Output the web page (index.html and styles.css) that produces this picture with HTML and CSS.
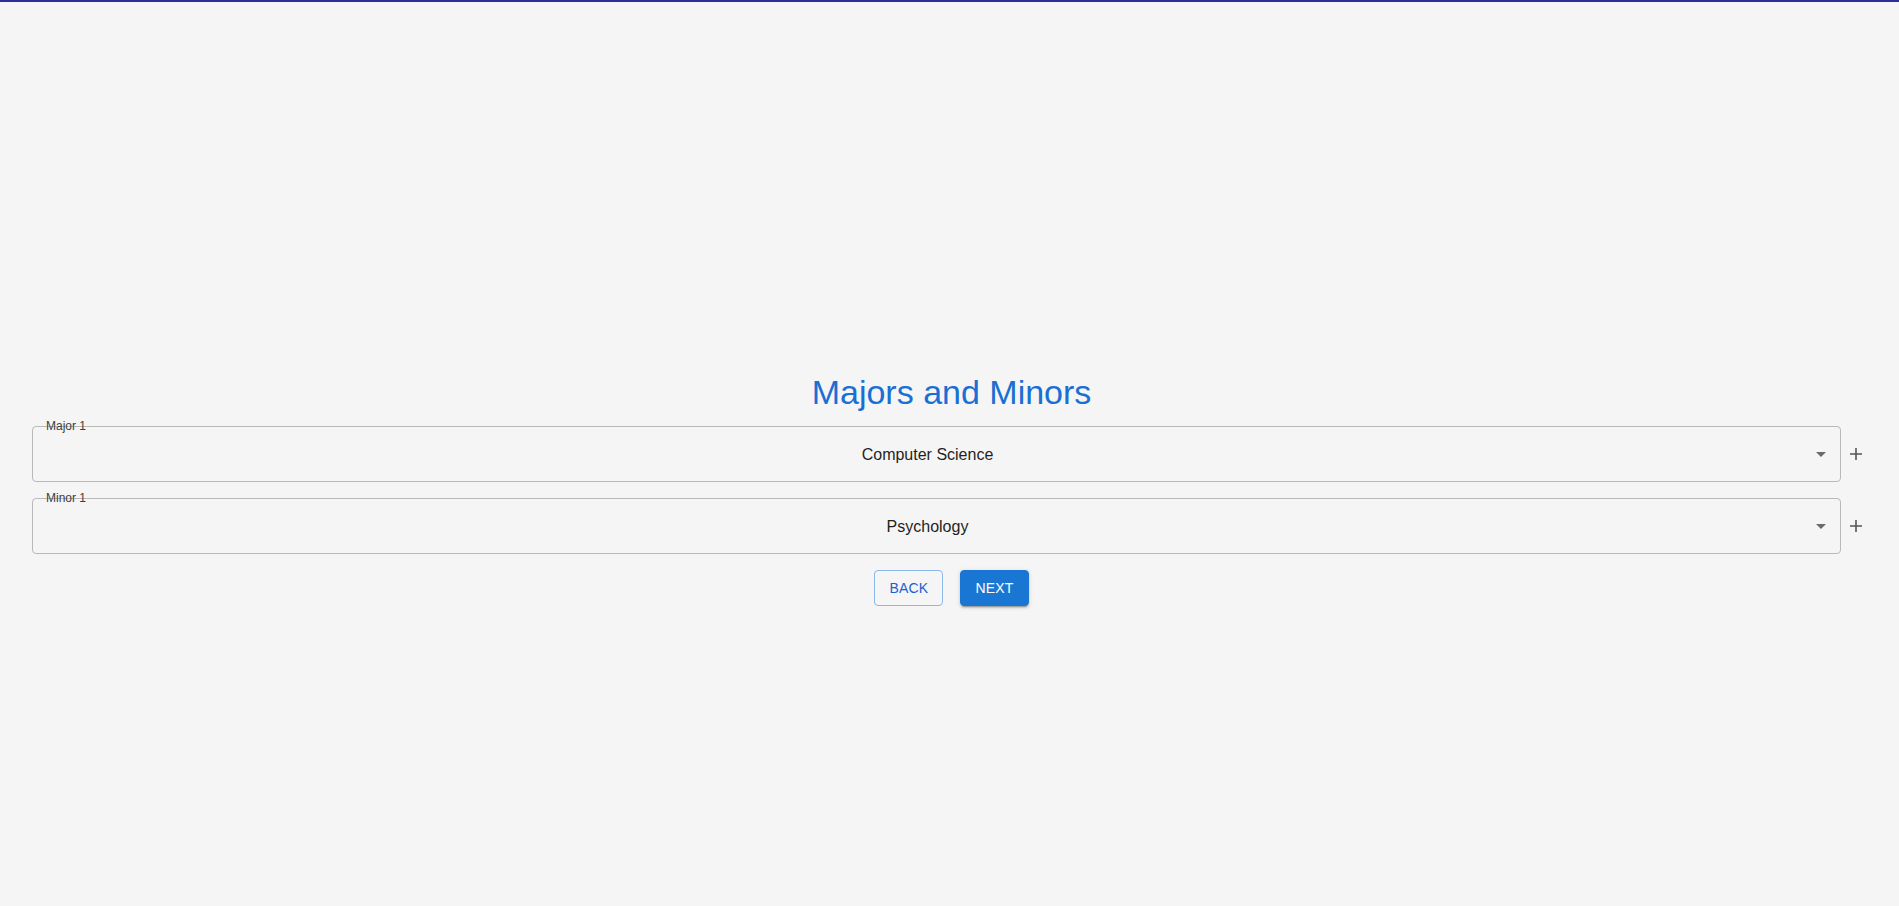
FILE: index.html
```html
<!DOCTYPE html>
<html lang="en">
<head>
  <meta charset="UTF-8" />
  <title>Majors and Minors</title>
  <link rel="stylesheet" href="styles.css">
</head>
<body>
  <div class="top-bar"></div>
  <div class="page">
    <h1 class="title">Majors and Minors</h1>

    <div class="field-row">
      <div class="select-box">
        <span class="select-label">Major 1</span>
        <div class="select-value">Computer Science</div>
        <svg class="select-arrow" viewBox="0 0 24 24" width="24" height="24"><path d="M7 10l5 5 5-5z"/></svg>
      </div>
      <button class="add-btn" title="Add major">
        <svg viewBox="0 0 12 12" width="12" height="12"><path d="M6 0v12M0 6h12"/></svg>
      </button>
    </div>

    <div class="field-row">
      <div class="select-box">
        <span class="select-label">Minor 1</span>
        <div class="select-value">Psychology</div>
        <svg class="select-arrow" viewBox="0 0 24 24" width="24" height="24"><path d="M7 10l5 5 5-5z"/></svg>
      </div>
      <button class="add-btn" title="Add minor">
        <svg viewBox="0 0 12 12" width="12" height="12"><path d="M6 0v12M0 6h12"/></svg>
      </button>
    </div>

    <div class="actions">
      <button class="btn btn-outline">Back</button>
      <button class="btn btn-filled">Next</button>
    </div>
  </div>
</body>
</html>
```

FILE: styles.css
```css
html, body {
  margin: 0;
  padding: 0;
}

body {
  font-family: 'Liberation Sans', Arial, sans-serif;
  background: #f5f5f5;
  min-height: 100vh;
}

.top-bar {
  height: 2px;
  background: #2c2f98;
}

.page {
  padding: 369px 28px 0 32px;
}

.title {
  margin: 0 0 13px;
  font-size: 34px;
  line-height: 42px;
  font-weight: 400;
  text-align: center;
  color: #1a6fd4;
}

.field-row {
  display: flex;
  align-items: center;
  margin-bottom: 16px;
}

.select-box {
  flex: 1;
  position: relative;
  height: 53px;
  border: 1px solid #b9b9b9;
  border-radius: 4px;
  display: flex;
  align-items: center;
  padding: 1px 32px 0 14px;
}

.select-label {
  position: absolute;
  left: 13px;
  top: -8px;
  font-size: 12px;
  line-height: 14px;
  color: #3d3d3d;
}

.select-value {
  flex: 1;
  text-align: center;
  font-size: 16px;
  color: #1f1f1f;
}

.select-arrow {
  position: absolute;
  right: 7px;
  top: 15px;
  fill: #6b6b6b;
}

.add-btn {
  width: 30px;
  height: 30px;
  padding: 0;
  border: none;
  background: none;
  display: flex;
  align-items: center;
  justify-content: center;
  cursor: pointer;
}

.add-btn svg {
  stroke: #555;
  stroke-width: 1.6;
  fill: none;
}

.actions {
  display: flex;
  justify-content: center;
  gap: 17px;
}

.btn {
  min-width: 64px;
  height: 36px;
  padding: 0 14px;
  border-radius: 4px;
  font-family: inherit;
  font-size: 14px;
  letter-spacing: 0.2px;
  text-transform: uppercase;
  cursor: pointer;
}

.btn-outline {
  background: transparent;
  border: 1px solid #8ab8e8;
  color: #1a5fd6;
}

.btn-filled {
  background: #1976d2;
  border: 1px solid #1976d2;
  color: #fff;
  box-shadow: 0 3px 1px -2px rgba(0,0,0,0.2), 0 2px 2px 0 rgba(0,0,0,0.14), 0 1px 5px 0 rgba(0,0,0,0.12);
}
```
